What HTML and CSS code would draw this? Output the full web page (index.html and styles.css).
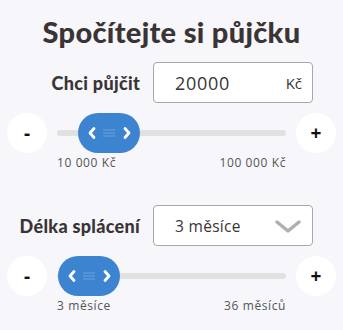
FILE: index.html
```html
<!DOCTYPE html>
<html lang="cs">
    <head>
        <title>Kalkulačka půjčky</title>
        <link rel="stylesheet" href="styles.css">
    </head>
    <body>
        <div id="calc">
            <h1 class="title">Spočítejte si půjčku</h1>

            <div class="field-row">
                <label class="field-label">Chci půjčit</label>
                <div class="field-box">
                    <span class="field-value">20000</span>
                    <span class="field-unit">Kč</span>
                </div>
            </div>
            <div class="slider-row">
                <div class="step-btn">-</div>
                <div class="track">
                    <div class="thumb" style="left: 21px;">
                        <svg width="62" height="40" viewBox="0 0 62 40">
                            <path d="M16 15.5 L12 20 L16 24.5" fill="none" stroke="#fff" stroke-width="2.8" stroke-linecap="round" stroke-linejoin="round"/>
                            <path d="M25 17 H37 M25 20 H37 M25 23 H37" stroke="rgba(255,255,255,0.25)" stroke-width="1.2"/>
                            <path d="M47 15.5 L51 20 L47 24.5" fill="none" stroke="#fff" stroke-width="2.8" stroke-linecap="round" stroke-linejoin="round"/>
                        </svg>
                    </div>
                </div>
                <div class="step-btn">+</div>
            </div>
            <div class="range-labels">
                <span>10 000 Kč</span>
                <span>100 000 Kč</span>
            </div>

            <div class="field-row second">
                <label class="field-label">Délka splácení</label>
                <div class="field-box">
                    <span class="field-value small">3 měsíce</span>
                    <svg class="chevron" width="26" height="14" viewBox="0 0 26 14">
                        <path d="M2 2 L13 11 L24 2" fill="none" stroke="#b0b0b0" stroke-width="3.5" stroke-linecap="round" stroke-linejoin="round"/>
                    </svg>
                </div>
            </div>
            <div class="slider-row">
                <div class="step-btn">-</div>
                <div class="track">
                    <div class="thumb" style="left: 1px;">
                        <svg width="62" height="40" viewBox="0 0 62 40">
                            <path d="M16 15.5 L12 20 L16 24.5" fill="none" stroke="#fff" stroke-width="2.8" stroke-linecap="round" stroke-linejoin="round"/>
                            <path d="M25 17 H37 M25 20 H37 M25 23 H37" stroke="rgba(255,255,255,0.25)" stroke-width="1.2"/>
                            <path d="M47 15.5 L51 20 L47 24.5" fill="none" stroke="#fff" stroke-width="2.8" stroke-linecap="round" stroke-linejoin="round"/>
                        </svg>
                    </div>
                </div>
                <div class="step-btn">+</div>
            </div>
            <div class="range-labels">
                <span>3 měsíce</span>
                <span>36 měsíců</span>
            </div>
        </div>
    </body>
</html>
```

FILE: styles.css
```css
*{
    margin: 0px;
    padding: 0px;
    box-sizing: border-box;
}

body{
    background-color: #f6f6fb;
    font-family: "Open Sans", sans-serif;
    color: #3a3434;
}

#calc{
    width: 343px;
    padding-top: 14px;
}

.title{
    font-family: Lato, sans-serif;
    font-weight: 900;
    font-size: 29px;
    text-align: center;
    line-height: 36px;
    letter-spacing: 0.3px;
}

.field-row{
    display: flex;
    align-items: center;
    margin-top: 12px;
}

.field-row.second{
    margin-top: 34px;
}

.field-label{
    width: 140px;
    text-align: right;
    font-family: Lato, sans-serif;
    font-weight: 900;
    font-size: 18px;
    letter-spacing: 0.3px;
}

.field-box{
    margin-left: 13px;
    width: 160px;
    height: 41px;
    background-color: white;
    border: 1px solid #a8a8a8;
    border-radius: 4px;
    display: flex;
    align-items: center;
    justify-content: space-between;
    padding: 0 10px 0 21px;
}

.field-value{
    font-family: "Open Sans", sans-serif;
    font-size: 18px;
    font-weight: 500;
    letter-spacing: 0.7px;
}

.field-value.small{
    font-size: 15.5px;
    font-weight: 400;
    letter-spacing: 0.3px;
}

.field-unit{
    font-size: 15px;
    font-weight: 500;
}

.chevron{
    margin-right: 1px;
    margin-top: 2px;
}

.slider-row{
    display: flex;
    align-items: center;
    padding: 0 7px;
    margin-top: 10px;
    height: 40px;
}

.step-btn{
    width: 40px;
    height: 40px;
    border-radius: 50%;
    background-color: white;
    font-family: "Open Sans", sans-serif;
    font-weight: 700;
    font-size: 19px;
    color: #111;
    display: flex;
    align-items: center;
    justify-content: center;
}

.track{
    position: relative;
    flex: 1;
    margin: 0 10px;
    height: 6px;
    border-radius: 3px;
    background-color: #e1e1e1;
}

.thumb{
    position: absolute;
    top: -17px;
    width: 62px;
    height: 40px;
    border-radius: 20px;
    background-color: #3d84d0;
}

.range-labels{
    display: flex;
    justify-content: space-between;
    padding: 0 57px;
    font-size: 12px;
    letter-spacing: 0.6px;
    color: #555;
    margin-top: 2px;
    line-height: 16px;
}
```
